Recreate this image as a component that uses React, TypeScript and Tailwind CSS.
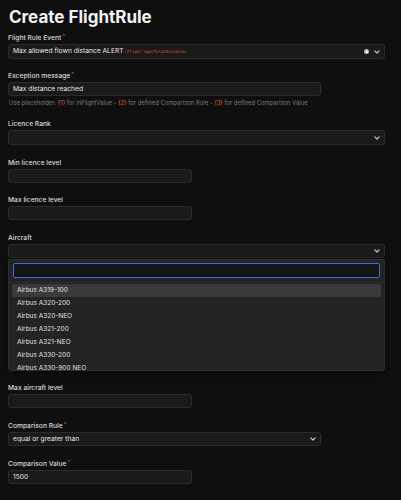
import React from "react";

const font = { fontFamily: "Inter, 'Liberation Sans', sans-serif" };

function Label({ text, req }: { text: string; req?: boolean }) {
  return (
    <div className="h-[12px] pt-[2px] leading-[10px] text-[6.7px] font-medium text-[#dadada] mb-[1px] flex">
      <span>{text}</span>
      {req && <span className="text-[#e0443a] text-[5px] leading-[6px] ml-[1px]">*</span>}
    </div>
  );
}

function Chevron() {
  return (
    <svg width="6" height="4" viewBox="0 0 6 4" className="text-[#c4c4c4]">
      <path d="M0.8 0.8 L3 3 L5.2 0.8" fill="none" stroke="currentColor" strokeWidth="1.2" strokeLinecap="round" strokeLinejoin="round" />
    </svg>
  );
}

function Box({ w, h = 14, children, select }: { w: string; h?: number; children?: React.ReactNode; select?: boolean }) {
  return (
    <div
      className={`${w} ${h === 15 ? "h-[15px]" : "h-[14px]"} rounded-[3px] border border-[#2b2b2b] bg-[#1a1a1a] flex items-center px-[4px] text-[6.7px] text-[#e6e6e6]`}
    >
      <div className="flex-1 flex items-center min-w-0">{children}</div>
      {select && <Chevron />}
    </div>
  );
}

const items = [
  "Airbus A319-100",
  "Airbus A320-200",
  "Airbus A320-NEO",
  "Airbus A321-200",
  "Airbus A321-NEO",
  "Airbus A330-200",
  "Airbus A330-900 NEO",
];

export default function App() {
  return (
    <div className="w-[401px] h-[500px] bg-[#0f0f10] overflow-hidden" style={font}>
      <div className="pl-[8px] pt-[7px]">
        <div className="text-[17px] leading-[20px] font-bold text-[#f2f2f2] pl-[1px] mb-[4px]">Create FlightRule</div>

        <Label text="Flight Rule Event" req />
        <div className="w-[377px] h-[15px] rounded-[3px] border border-[#2b2b2b] bg-[#1a1a1a] flex items-center pl-[4px] pr-[4px]">
          <div className="flex-1 flex items-baseline text-[6.7px] text-[#e6e6e6]">
            <span>Max allowed flown distance ALERT</span>
            <span className="text-[4px] text-[#d9532f] ml-[1px]" style={{ fontFamily: "'DejaVu Sans Mono', monospace" }}>
              (Flight-&gt;getTotalDistance)
            </span>
          </div>
          <span className="w-[5px] h-[5px] rounded-full bg-[#bdbdbd] flex items-center justify-center mr-[5px]">
            <span className="w-[2px] h-[2px] bg-[#fafafa]" />
          </span>
          <Chevron />
        </div>

        <div className="mt-[10px]">
          <Label text="Exception message" req />
          <Box w="w-[313px]">Max distance reached</Box>
          <div className="text-[5.9px] leading-[10px] text-[#7a7a7a] mt-[2px] pl-[1px]">
            Use placeholder: <span className="text-[#e8583a]">{"{1}"}</span> for inFlightValue -{" "}
            <span className="text-[#e8583a]">{"{2}"}</span> for defined Comparison Rule -{" "}
            <span className="text-[#e8583a]">{"{3}"}</span> for defined Comparison Value
          </div>
        </div>

        <div className="mt-[9px]">
          <Label text="Licence Rank" />
          <Box w="w-[377px]" h={15} select />
        </div>

        <div className="mt-[11px]">
          <Label text="Min licence level" />
          <Box w="w-[184px]" />
        </div>

        <div className="mt-[10px]">
          <Label text="Max licence level" />
          <Box w="w-[184px]" />
        </div>

        <div className="mt-[11px] relative">
          <Label text="Aircraft" />
          <Box w="w-[377px]" select />
          <div className="h-[111px]">
            <div className="pt-[10px]">
              <Label text="Min aircraft level" />
              <Box w="w-[184px]" />
            </div>
          </div>

          <div className="absolute left-0 top-[28px] w-[377px] h-[112px] bg-[#232323] border border-[#2e2e2e] rounded-b-[3px] overflow-hidden shadow-[0_2px_6px_rgba(0,0,0,0.5)]">
            <div className="px-[4px] pt-[3px] pb-[4px]">
              <div className="h-[15px] rounded-[2px] border-[1.5px] border-[#3f6fd8] bg-[#151516]" />
            </div>
            <div className="h-px bg-[#2c2c2c]" />
            <div className="px-[3px] pt-[1px]">
              {items.map((it, i) => (
                <div
                  key={it}
                  className={`h-[13px] leading-[13px] pl-[5px] text-[6.5px] text-[#e0e0e0] rounded-[2px] ${i === 0 ? "bg-[#3a3a3a]" : ""}`}
                >
                  {it}
                </div>
              ))}
            </div>
          </div>
        </div>

        <div className="mt-[12px]">
          <Label text="Max aircraft level" />
          <Box w="w-[184px]" />
        </div>

        <div className="mt-[11px]">
          <Label text="Comparison Rule" req />
          <Box w="w-[313px]" select>equal or greater than</Box>
        </div>

        <div className="mt-[11px]">
          <Label text="Comparison Value" req />
          <Box w="w-[184px]">1500</Box>
        </div>
      </div>
    </div>
  );
}
